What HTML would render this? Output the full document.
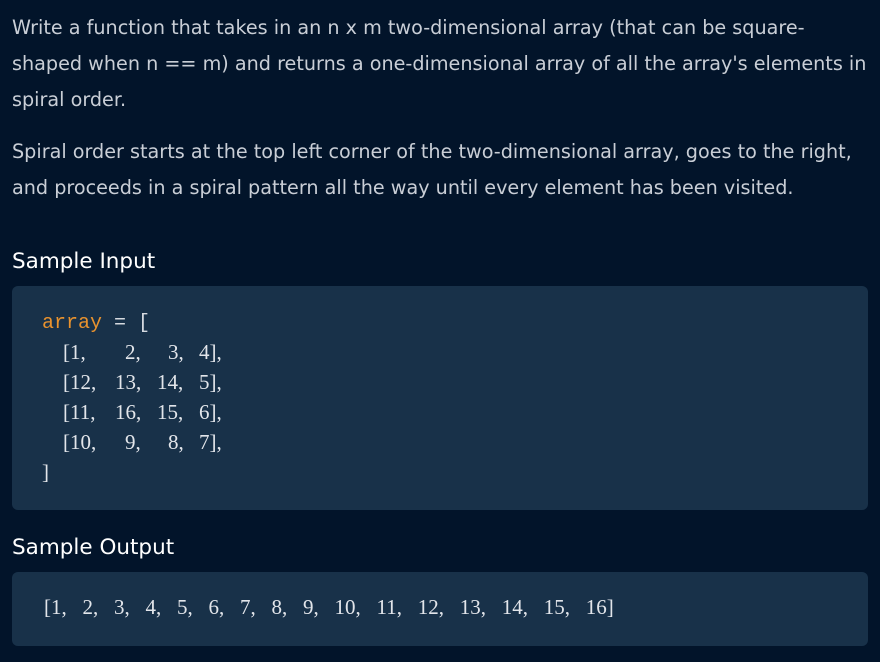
<!DOCTYPE html>
<html><head><meta charset="utf-8"><style>
html,body{margin:0;padding:0;background:#02142a;width:880px;height:662px;overflow:hidden}
body{font-family:"DejaVu Sans","Liberation Sans",sans-serif;color:#c9ced6}
.p{position:absolute;left:12px;font-size:19.2px;line-height:36px;white-space:nowrap}
h2{position:absolute;left:12px;margin:0;font-family:"DejaVu Sans",sans-serif;font-size:21.5px;font-weight:normal;color:#fff}
.box{position:absolute;left:12px;width:856px;background:#183149;border-radius:6px}
.mono{position:absolute;font-family:"Liberation Mono",monospace;font-size:20px;color:#d6dae0}
.s{position:absolute;font-family:"Liberation Serif",serif;font-size:21px;color:#e2e5ea;white-space:pre}
</style></head><body>
<div class="p" style="top:10px">Write a function that takes in an n x m two-dimensional array (that can be square-<br>shaped when n == m) and returns a one-dimensional array of all the array's elements in<br>spiral order.</div>
<div class="p" style="top:134px">Spiral order starts at the top left corner of the two-dimensional array, goes to the right,<br>and proceeds in a spiral pattern all the way until every element has been visited.</div>
<h2 style="top:249px">Sample Input</h2>
<div class="box" style="top:286px;height:224px"></div>
<div class="mono" style="left:42px;top:312px"><span style="color:#e8922e">array</span> = [</div>
<div class="s" style="left:63px;top:340px">[1,</div><div class="s" style="left:125px;top:340px">2,</div><div class="s" style="left:168px;top:340px">3,</div><div class="s" style="left:199px;top:340px">4],</div>
<div class="s" style="left:63px;top:370px">[12,</div><div class="s" style="left:115px;top:370px">13,</div><div class="s" style="left:157px;top:370px">14,</div><div class="s" style="left:199px;top:370px">5],</div>
<div class="s" style="left:63px;top:400px">[11,</div><div class="s" style="left:115px;top:400px">16,</div><div class="s" style="left:157px;top:400px">15,</div><div class="s" style="left:199px;top:400px">6],</div>
<div class="s" style="left:63px;top:430px">[10,</div><div class="s" style="left:125px;top:430px">9,</div><div class="s" style="left:168px;top:430px">8,</div><div class="s" style="left:199px;top:430px">7],</div>
<div class="s" style="left:42px;top:460px">]</div>
<h2 style="top:535px">Sample Output</h2>
<div class="box" style="top:572px;height:74px"></div>
<div class="s" style="left:44px;top:595px;word-spacing:10.5px">[1, 2, 3, 4, 5, 6, 7, 8, 9, 10, 11, 12, 13, 14, 15, 16]</div>
</body></html>
